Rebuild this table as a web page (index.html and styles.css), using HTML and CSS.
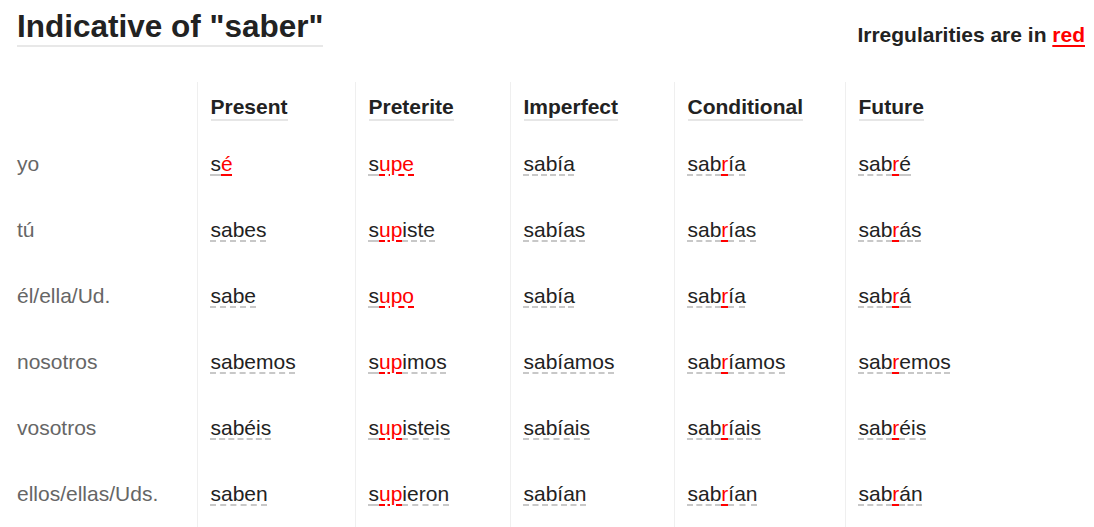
FILE: index.html
```html
<!DOCTYPE html>
<html lang="en">
<head>
<meta charset="utf-8">
<title>Indicative of "saber"</title>
<link rel="stylesheet" href="styles.css">
</head>
<body>
<div class="page">
  <div class="top">
    <h1 class="title">Indicative of "saber"</h1>
    <p class="note">Irregularities are in <span class="note-red">red</span></p>
  </div>
  <table class="conj">
    <colgroup>
      <col class="c-pron">
      <col class="c-pres">
      <col class="c-pret">
      <col class="c-imp">
      <col class="c-cond">
      <col class="c-fut">
    </colgroup>
    <thead>
      <tr>
        <th class="pron"></th>
        <th><span class="th-label">Present</span></th>
        <th><span class="th-label">Preterite</span></th>
        <th><span class="th-label">Imperfect</span></th>
        <th><span class="th-label">Conditional</span></th>
        <th><span class="th-label">Future</span></th>
      </tr>
    </thead>
    <tbody>
      <tr>
        <td class="pron">yo</td>
        <td><span class="reg">s</span><span class="irr">é</span></td>
        <td><span class="reg">s</span><span class="irr">upe</span></td>
        <td><span class="reg">sabía</span></td>
        <td><span class="reg">sab</span><span class="irr">r</span><span class="reg">ía</span></td>
        <td><span class="reg">sab</span><span class="irr">r</span><span class="reg">é</span></td>
      </tr>
      <tr>
        <td class="pron">tú</td>
        <td><span class="reg">sabes</span></td>
        <td><span class="reg">s</span><span class="irr">up</span><span class="reg">iste</span></td>
        <td><span class="reg">sabías</span></td>
        <td><span class="reg">sab</span><span class="irr">r</span><span class="reg">ías</span></td>
        <td><span class="reg">sab</span><span class="irr">r</span><span class="reg">ás</span></td>
      </tr>
      <tr>
        <td class="pron">él/ella/Ud.</td>
        <td><span class="reg">sabe</span></td>
        <td><span class="reg">s</span><span class="irr">upo</span></td>
        <td><span class="reg">sabía</span></td>
        <td><span class="reg">sab</span><span class="irr">r</span><span class="reg">ía</span></td>
        <td><span class="reg">sab</span><span class="irr">r</span><span class="reg">á</span></td>
      </tr>
      <tr>
        <td class="pron">nosotros</td>
        <td><span class="reg">sabemos</span></td>
        <td><span class="reg">s</span><span class="irr">up</span><span class="reg">imos</span></td>
        <td><span class="reg">sabíamos</span></td>
        <td><span class="reg">sab</span><span class="irr">r</span><span class="reg">íamos</span></td>
        <td><span class="reg">sab</span><span class="irr">r</span><span class="reg">emos</span></td>
      </tr>
      <tr>
        <td class="pron">vosotros</td>
        <td><span class="reg">sabéis</span></td>
        <td><span class="reg">s</span><span class="irr">up</span><span class="reg">isteis</span></td>
        <td><span class="reg">sabíais</span></td>
        <td><span class="reg">sab</span><span class="irr">r</span><span class="reg">íais</span></td>
        <td><span class="reg">sab</span><span class="irr">r</span><span class="reg">éis</span></td>
      </tr>
      <tr>
        <td class="pron">ellos/ellas/Uds.</td>
        <td><span class="reg">saben</span></td>
        <td><span class="reg">s</span><span class="irr">up</span><span class="reg">ieron</span></td>
        <td><span class="reg">sabían</span></td>
        <td><span class="reg">sab</span><span class="irr">r</span><span class="reg">ían</span></td>
        <td><span class="reg">sab</span><span class="irr">r</span><span class="reg">án</span></td>
      </tr>
    </tbody>
  </table>
</div>
</body>
</html>
```
FILE: styles.css
```css
html, body {
  margin: 0;
  padding: 0;
  background: #fff;
}

body {
  font-family: "Liberation Sans", Arial, sans-serif;
  color: #222;
}

.page {
  padding: 8px 9px 0 17px;
}

.top {
  display: flex;
  justify-content: space-between;
  align-items: flex-start;
}

.title {
  margin: 0;
  font-size: 31.5px;
  font-weight: bold;
  color: #222;
  display: inline-block;
  border-bottom: 2px solid #e8e8e8;
  line-height: normal;
}

.note {
  margin: 15px 0 0;
  font-size: 21px;
  font-weight: bold;
  line-height: 24px;
  color: #222;
}

.note-red {
  color: #f00;
  text-decoration: underline solid #f00;
  text-decoration-thickness: 2px;
  text-underline-offset: 3px;
}

.conj {
  margin-top: 35px;
  width: 100%;
  border-collapse: collapse;
  table-layout: fixed;
  font-size: 21px;
  line-height: 24px;
}

.c-pron { width: 180px; }
.c-pres { width: 158px; }
.c-pret { width: 155px; }
.c-imp { width: 164px; }
.c-cond { width: 171px; }

.conj th,
.conj td {
  border-left: 1px solid #efefef;
  text-align: left;
  vertical-align: top;
  padding-left: 13px;
}

.conj th.pron,
.conj td.pron {
  border-left: none;
  padding-left: 0;
}

.conj th {
  padding-top: 13px;
  padding-bottom: 10px;
  font-weight: bold;
}

.th-label {
  display: inline-block;
  border-bottom: 2px solid #e6e6e6;
  color: #222;
}

.conj td {
  padding-top: 21px;
  padding-bottom: 21px;
}

.conj td.pron {
  color: #666;
}

.reg,
.irr {
  text-decoration-line: underline;
  text-decoration-style: dashed;
  text-decoration-thickness: 1.5px;
  text-underline-offset: 3px;
}

.reg {
  color: #222;
  text-decoration-color: #c8c8c8;
}

.irr {
  color: #f00;
  text-decoration-color: #f00;
}
```
